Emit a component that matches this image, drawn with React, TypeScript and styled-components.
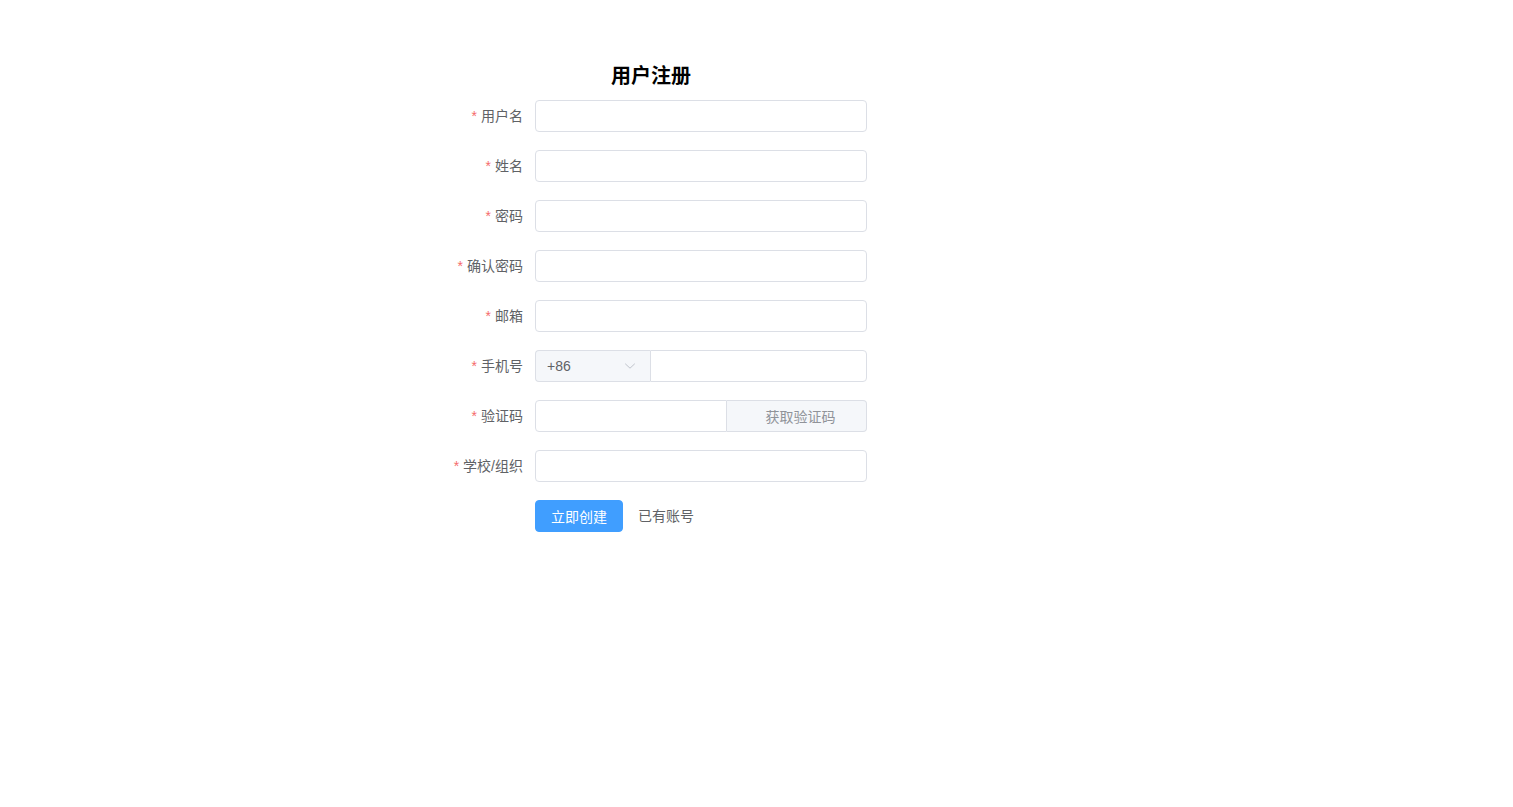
import styled, { createGlobalStyle } from "styled-components";

const GlobalStyle = createGlobalStyle`
    html, body {
        margin: 0;
        padding: 0;
        background: #ffffff;
    }

    body {
        font-family: "Liberation Sans", "Noto Sans CJK SC", sans-serif;
        color: #606266;
        -webkit-font-smoothing: antialiased;
    }

    * {
        box-sizing: border-box;
    }
`;

interface FieldDef {
    key: string;
    label: string;
    type?: string;
}

const simpleFieldsTop: FieldDef[] = [
    { key: "username", label: "用户名" },
    { key: "name", label: "姓名" },
    { key: "password", label: "密码", type: "password" },
    { key: "confirm", label: "确认密码", type: "password" },
    { key: "email", label: "邮箱" },
];

function ChevronDown() {
    return (
        <svg width="14" height="14" viewBox="0 0 14 14" fill="none">
            <path d="M2.5 5 L7 9.2 L11.5 5" stroke="#c0c4cc" strokeWidth="1" strokeLinecap="round" strokeLinejoin="round" />
        </svg>
    );
}

export default function App() {
    return (
        <>
            <GlobalStyle />
            <Page>
                <FormBox>
                    <Title>用户注册</Title>
                    {simpleFieldsTop.map((field) => (
                        <FormItem key={field.key}>
                            <Label>
                                <Star>*</Star>
                                {field.label}
                            </Label>
                            <Content>
                                <TextInput type={field.type ?? "text"} autoComplete="off" />
                            </Content>
                        </FormItem>
                    ))}

                    <FormItem>
                        <Label>
                            <Star>*</Star>
                            手机号
                        </Label>
                        <Content>
                            <Group>
                                <Prepend $width={115}>
                                    <SelectValue>+86</SelectValue>
                                    <ChevronDown />
                                </Prepend>
                                <GroupInput type="text" $side="right" />
                            </Group>
                        </Content>
                    </FormItem>

                    <FormItem>
                        <Label>
                            <Star>*</Star>
                            验证码
                        </Label>
                        <Content>
                            <Group>
                                <GroupInput type="text" $side="left" />
                                <AppendButton type="button">获取验证码</AppendButton>
                            </Group>
                        </Content>
                    </FormItem>

                    <FormItem>
                        <Label>
                            <Star>*</Star>
                            学校/组织
                        </Label>
                        <Content>
                            <TextInput type="text" />
                        </Content>
                    </FormItem>

                    <FormItem>
                        <Label />
                        <Content>
                            <Actions>
                                <PrimaryButton type="button">立即创建</PrimaryButton>
                                <LinkText>已有账号</LinkText>
                            </Actions>
                        </Content>
                    </FormItem>
                </FormBox>
            </Page>
        </>
    );
}

const Page = styled.div`
    width: 100%;
    min-height: 807px;
    padding: 62px 0 0 435px;
`;

const FormBox = styled.form`
    width: 432px;
    display: flex;
    flex-direction: column;
`;

const Title = styled.h3`
    margin: 0 0 10px;
    font-size: 20px;
    line-height: 28px;
    font-weight: 700;
    color: #000000;
    text-align: center;
`;

const FormItem = styled.div`
    display: flex;
    align-items: center;
    height: 32px;
    margin-bottom: 18px;
`;

const Label = styled.label`
    flex: 0 0 100px;
    padding-right: 12px;
    text-align: right;
    font-size: 14px;
    line-height: 32px;
    color: #606266;
    white-space: nowrap;
`;

const Star = styled.span`
    color: #f56c6c;
    margin-right: 4px;
`;

const Content = styled.div`
    flex: 1;
    min-width: 0;
`;

const TextInput = styled.input`
    display: block;
    width: 100%;
    height: 32px;
    padding: 0 15px;
    border: 1px solid #dcdfe6;
    border-radius: 4px;
    background: #ffffff;
    color: #606266;
    font: inherit;
    font-size: 14px;
    outline: none;

    &:focus {
        border-color: #409eff;
    }
`;

const Group = styled.div`
    display: flex;
    width: 100%;
    height: 32px;
`;

const Prepend = styled.div<{ $width: number }>`
    flex: 0 0 ${({ $width }) => $width}px;
    display: flex;
    align-items: center;
    justify-content: space-between;
    padding: 0 13px 0 11px;
    background: #f5f7fa;
    border: 1px solid #dcdfe6;
    border-right: none;
    border-radius: 4px 0 0 4px;
    cursor: pointer;
`;

const SelectValue = styled.span`
    font-size: 14px;
    color: #606266;
`;

const GroupInput = styled.input<{ $side: "left" | "right" }>`
    flex: 1;
    min-width: 0;
    height: 32px;
    padding: 0 15px;
    border: 1px solid #dcdfe6;
    border-radius: ${({ $side }) => ($side === "right" ? "0 4px 4px 0" : "4px 0 0 4px")};
    background: #ffffff;
    color: #606266;
    font: inherit;
    font-size: 14px;
    outline: none;
`;

const AppendButton = styled.button`
    flex: 0 0 140px;
    height: 32px;
    padding: 0 0 1px 8px;
    border: 1px solid #dcdfe6;
    border-left: none;
    border-radius: 0 4px 4px 0;
    background: #f5f7fa;
    color: #909399;
    font: inherit;
    font-size: 14px;
    cursor: pointer;
`;

const Actions = styled.div`
    display: flex;
    align-items: center;
    gap: 15px;
`;

const PrimaryButton = styled.button`
    width: 88px;
    height: 32px;
    padding: 0 0 1px;
    border: 1px solid #409eff;
    border-radius: 4px;
    background: #409eff;
    color: #ffffff;
    font: inherit;
    font-size: 14px;
    cursor: pointer;
`;

const LinkText = styled.span`
    font-size: 14px;
    line-height: 32px;
    padding-bottom: 1px;
    color: #606266;
    cursor: pointer;
`;
